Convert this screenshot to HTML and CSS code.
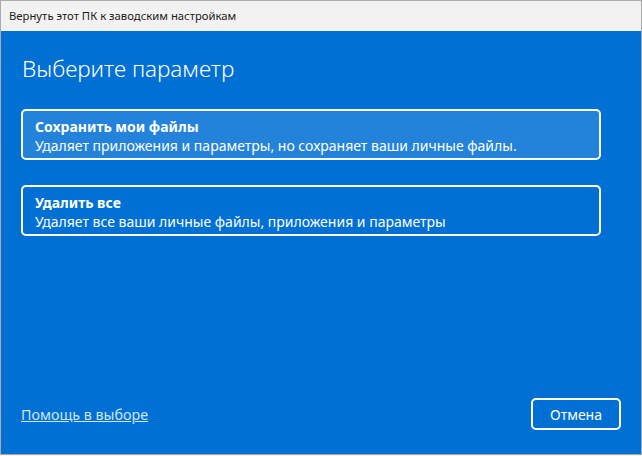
FILE: index.html
```html
<!DOCTYPE html>
<html lang="ru">
<head>
    <meta charset="UTF-8">
    <meta name="viewport" content="width=device-width, initial-scale=1.0">
    <title>Вернуть этот ПК к заводским настройкам</title>
    <link rel="stylesheet" href="styles.css">
</head>
<body>
    <div class="window">
        <div class="titlebar">Вернуть этот ПК к заводским настройкам</div>
        <div class="content">
            <h1>Выберите параметр</h1>
            <div class="options">
                <div class="option selected">
                    <h2>Сохранить мои файлы</h2>
                    <p>Удаляет приложения и параметры, но сохраняет ваши личные файлы.</p>
                </div>
                <div class="option">
                    <h2>Удалить все</h2>
                    <p>Удаляет все ваши личные файлы, приложения и параметры</p>
                </div>
            </div>
            <div class="footer">
                <a href="#" class="help">Помощь в выборе</a>
                <button class="cancel">Отмена</button>
            </div>
        </div>
    </div>
</body>
</html>
```

FILE: styles.css
```css
html, body {
    margin: 0;
    padding: 0;
    height: 100%;
}
body {
    font-family: "Noto Sans", "Open Sans", sans-serif;
    background: #f2f2f2;
}
.window {
    height: 455px;
    box-sizing: border-box;
    border: 1px solid #aaaaaa;
    display: flex;
    flex-direction: column;
}
.titlebar {
    height: 30px;
    line-height: 29px;
    padding-left: 8px;
    font-size: 11.3px;
    color: #1a1a1a;
    background: #f2f2f2;
}
.content {
    flex: 1;
    background: #0070d4;
    color: #fff;
    padding: 0 20px 0 20px;
    display: flex;
    flex-direction: column;
}
.content h1 {
    font-weight: 300;
    font-size: 22.5px;
    margin: 22px 0 0 1px;
    line-height: 32px;
}
.options {
    margin-top: 24px;
    display: flex;
    flex-direction: column;
    gap: 25px;
    width: 580px;
}
.option {
    border: 2px solid #fff;
    border-radius: 5px;
    padding: 6px 12px 8px;
    height: 51px;
    box-sizing: border-box;
}
.option.selected {
    background: #2383da;
}
.option h2 {
    margin: 0;
    font-size: 14px;
    font-weight: 700;
    line-height: 19px;
}
.option p {
    margin: 0;
    font-size: 14px;
    line-height: 19px;
}
.footer {
    margin-top: auto;
    margin-bottom: 24px;
    display: flex;
    justify-content: space-between;
    align-items: center;
}
.help {
    color: #d0e6fa;
    font-size: 14.3px;
    margin-left: 0;
}
.cancel {
    font-family: inherit;
    background: transparent;
    color: #fff;
    border: 2px solid #fff;
    border-radius: 5px;
    width: 90px;
    height: 32px;
    font-size: 14px;
    margin-right: 0;
}
```
